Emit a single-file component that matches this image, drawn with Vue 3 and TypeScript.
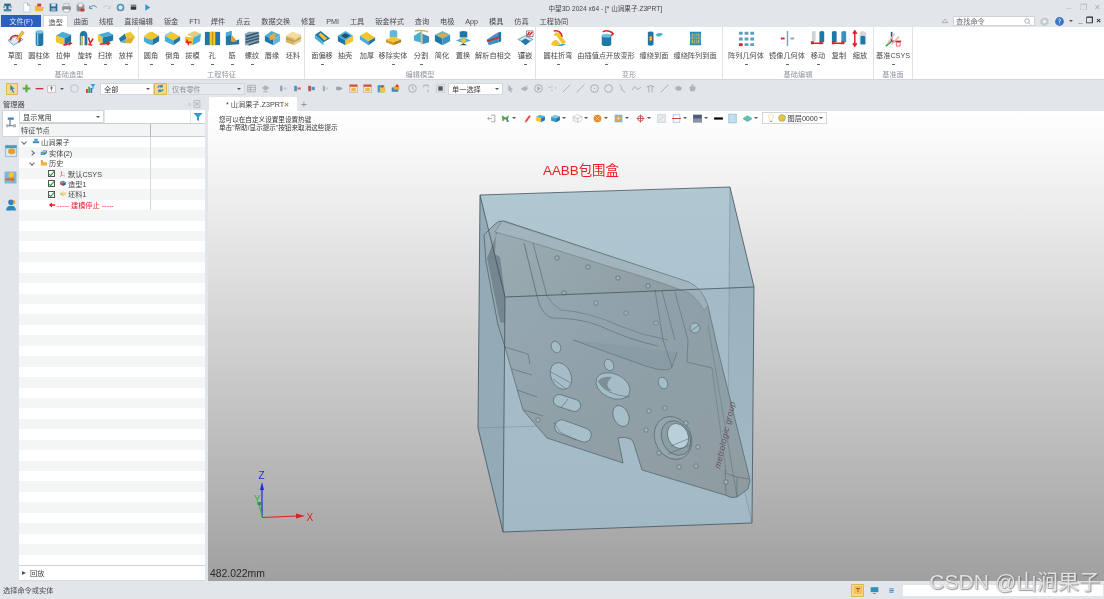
<script setup lang="ts">
import { h } from 'vue';

type Shape = [string, string, string?];

const box = (t: string, l: string, r: string): Shape[] => [
	['M9 3L18 6L11 10L2 7Z', t],
	['M2 7L11 10V17L2 14Z', l],
	['M11 10L18 6V13L11 17Z', r],
];
const BLUE = '#49aed6';
const DEEP = '#1f77a8';
const YEL = '#f3c531';
const TAN = '#e5cc80';
const RED = '#d8262c';

const icons: Record<string, Shape[]> = {
	sketch: [['M2 12L11 7L18 11L8 17Z', '#dce8f2', '#3f7fb0'], ['M5 12a5 4 0 1 1 8 2', 'none', RED], ['M11 10L17 2L19 4L13 11Z', YEL, '#b9801a']],
	cyl: [['M6 3V16A4 2 0 0 0 14 16V3Z', DEEP], ['M6 3A4 2 0 0 1 14 3A4 2 0 0 1 6 3Z', '#74c8e6'], ['M8 5V17', 'none', '#7cc8e8']],
	extrude: [...box(BLUE, YEL, DEEP), ['M10 17L18 15L16 13M18 15L16 17', 'none', RED]],
	revolve: [['M4 17V7Q4 2 8 2Q12 2 12 7V17H9V8Q8 6 7 8V17Z', DEEP], ['M5 17V7L7 8V17Z', YEL], ['M13 9L15 15L18 10M13 16L17 17', 'none', RED]],
	sweep: [['M2 6L13 3L18 6L7 9Z', BLUE], ['M2 6L7 9V16L2 13Z', YEL], ['M7 9L18 6V12L7 16Z', DEEP], ['M4 16L14 15L12 13M14 15L12 17', 'none', RED]],
	loft: [['M8 5L14 3L19 8L10 10Z', YEL], ['M2 10L8 5L10 10L4 14Z', DEEP], ['M10 10L19 8L15 15L8 15Z', '#e2b02c'], ['M4 14L10 10L8 15Z', '#6ea7c2']],
	fillet: [['M2 8Q6 3 11 3L18 7L11 11Q5 11 2 8Z', YEL], ['M2 8Q5 11 11 11V17Q5 16 2 13Z', BLUE], ['M11 11L18 7V13L11 17Z', DEEP]],
	chamfer: [['M2 7L9 3L18 8L11 12Z', YEL], ['M2 7L11 12V17L2 13Z', BLUE], ['M11 12L18 8V12L11 17Z', DEEP], ['M9 3L2 7', 'none', '#8dd0ea']],
	draft: [['M4 6L12 2L19 5L11 9Z', TAN], ['M2 8L11 9L10 17L2 14Z', YEL], ['M11 9L19 5L18 13L10 17Z', BLUE], ['M4 11L6 17M3 14H9', 'none', RED]],
	hole: [['M2 3H18V17H2Z', DEEP], ['M7 3H13V17H7Z', YEL], ['M10 3V17', 'none', '#c79a1c']],
	rib: [['M3 4L9 2V13L17 11V16L3 17Z', DEEP], ['M9 6L15 13L9 14Z', '#ef9c2c'], ['M3 4L9 2V6L3 8Z', BLUE]],
	thread: [['M2 5L6 3L17 3V15L6 17L2 17Z', '#8aa3b3'], ['M3 8L16 4M3 11L17 7M3 14L17 10M6 17L17 13', 'none', '#33566e']],
	lip: [['M2 7L9 2L18 6L11 11Z', BLUE], ['M2 7L11 11V17L2 13Z', DEEP], ['M11 11L18 6V13L11 17Z', '#60b6da'], ['M7 7L13 4V10L7 12Z', '#f1a83a']],
	stock: [...box('#f1dc9c', '#d9b55d', '#e9cf84'), ['M2 10L11 13L18 9', 'none', '#bfa05a']],
	faceoff: [['M2 6L8 2L18 10L11 14Z', DEEP], ['M6 6L8 4L15 10L12 12Z', YEL], ['M2 6L11 14V17L2 10Z', BLUE]],
	shell: [['M2 7L10 2L18 7L10 12Z', BLUE], ['M5 7L10 4.5L15 7L10 10Z', '#234f72'], ['M2 7L10 12V17L2 13Z', DEEP], ['M10 12L18 7V13L10 17Z', YEL]],
	thicken: [['M2 7L9 3L18 9L11 13Z', YEL], ['M2 7L11 13V17L2 11Z', BLUE], ['M11 13L18 9V12L11 17Z', DEEP]],
	remove: [['M6 3A4 2 0 0 1 14 3V9H6Z', '#62b8dc'], ['M2 11L10 8L18 11L10 14Z', YEL], ['M2 11L10 14V17L2 14Z', '#d49a20'], ['M10 14L18 11V14L10 17Z', '#b77f19']],
	split: [['M2 7L9 3L11 5V15L2 12Z', BLUE], ['M11 5L18 8V14L11 16Z', '#3a8fbd'], ['M3 2Q10 1 17 3', 'none', '#cbb67a'], ['M10 2V16', 'none', YEL]],
	simplify: [['M2 6L10 2L18 6L10 10Z', '#69c1a0'], ['M2 6L10 10V17L2 13Z', DEEP], ['M10 10L18 6V13L10 17Z', '#3d92c2'], ['M4 7L10 9L16 6L10 5Z', '#e7a93c']],
	replace: [['M6 9V3Q10 1 14 3V9Z', DEEP], ['M2 12L10 9L18 12L10 15Z', BLUE], ['M7 12L10 9L13 12L10 16Z', YEL], ['M10 15L6 17H14Z', '#234f72']],
	selfx: [['M3 11L14 4L16 14L5 17Z', '#3d92c2'], ['M14 4L18 3L18 13L16 14Z', DEEP], ['M3 13L16 9', 'none', RED]],
	tess: [['M2 11L10 7L18 11L10 15Z', '#cfe2ee', '#3a7ea8'], ['M5 13L10 10L15 13L10 17Z', DEEP], ['M11 2H18V8H11Z', '#fff', '#555'], ['M12 7L14 3M14 7L17 3', 'none', RED]],
	cylbend: [['M2 16Q5 10 9 12L12 16L8 18Q4 18 2 16Z', YEL], ['M6 4Q12 2 14 9L18 14L14 16L10 10Q8 6 5 7Z', YEL], ['M12 16Q16 15 18 16L14 18H8Z', BLUE], ['M5 2Q12 1 14 8', 'none', RED]],
	morph: [['M5 7V16A5 2 0 0 0 15 16V7Z', DEEP], ['M5 7A5 2 0 0 1 15 7A5 2 0 0 1 5 7Z', '#6ac1e2'], ['M6 3Q12 0 17 5M15 3L17 5L15 7', 'none', RED]],
	wrap: [['M3 4A3 1.5 0 0 1 9 4V16A3 1.5 0 0 1 3 16Z', DEEP], ['M4 8H8V12H4Z', RED], ['M11 6Q14 3 19 5Q17 8 13 8Z', BLUE], ['M5 8L7 12M7 8L5 12', 'none', YEL]],
	wraparr: [['M4 3H16Q15 10 16 17H4Q5 10 4 3Z', '#2b8ab8'], ['M6 5H14V15H6Z', YEL], ['M8 5V15M10 5V15M12 5V15M6 8H14M6 11H14', 'none', '#4a9ac0']],
	pattern: [['M2 3H6V6H2ZM8 3H12V6H8ZM14 3H18V6H14ZM8 9H12V12H8ZM14 9H18V12H14ZM8 15H12V18H8ZM14 15H18V18H14ZM2 9H6V12H2Z', '#5f9dc1'], ['M2 15H6V18H2Z', RED]],
	mirror: [['M10 2V18', 'none', '#7fa9c2'], ['M3 9H7V11H3Z', RED], ['M13 9H17V11H13Z', '#7fa9c2']],
	move: [['M3 3Q6 1 7 3V13L3 14Z', '#cfd4d8'], ['M11 3Q14 1 16 3V14H11Z', DEEP], ['M4 15H15', 'none', RED], ['M2 13H5V16H2ZM11 13H14V16H11Z', RED]],
	copy: [['M2 3Q5 1 7 3V14H2Z', DEEP], ['M12 3Q15 1 17 3V14H12Z', '#3790bd'], ['M4 15H15', 'none', RED], ['M2 13H5V16H2ZM12 13H15V16H12Z', RED]],
	scale: [['M4 3V17M2 5L4 2L6 5M2 15L4 18L6 15', 'none', RED], ['M9 4Q12 0 16 4V16Q12 18 9 16Z', '#d3d8dc'], ['M10 8Q12 6 15 8V16H10Z', DEEP]],
	csys: [['M8 3V13', 'none', '#2442c8'], ['M8 13L2 18', 'none', '#2fa84f'], ['M8 13L18 13', 'none', RED], ['M11 5L4 15M8 16L16 8', 'none', '#eeb0b0'], ['M13 14H17V18H13Z', '#fff', RED]],
	page: [['M5 2H12L16 6V18H5Z', '#fff', '#9aa3ab'], ['M12 2V6H16', 'none', '#9aa3ab']],
	open: [['M2 7H8L10 9H18L16 17H2Z', '#f0b93a'], ['M6 3H13V8H6Z', '#d8362c']],
	save: [['M3 3H17V17H3Z', '#2f6d9c'], ['M6 3H14V8H6Z', '#dce6ee'], ['M6 11H14V17H6Z', '#8fb2cc']],
	print: [['M5 3H15V8H5Z', '#eee', '#777'], ['M2 8H18V15H2Z', '#8c949b'], ['M5 13H15V18H5Z', '#fff', '#777']],
	saveas: [['M3 5H17V17H3Z', '#8c949b'], ['M6 2H14V9H6Z', '#eee', '#777'], ['M10 12H17V17H10Z', '#d8362c']],
	undo: [['M4 10Q10 3 16 10', 'none', '#3f83ad'], ['M3 7V12H8', 'none', '#3f83ad']],
	redo: [['M4 10Q10 3 16 10', 'none', '#c2c7cb'], ['M17 7V12H12', 'none', '#c2c7cb']],
	ring: [['M10 3A7 7 0 1 0 10 17A7 7 0 1 0 10 3ZM10 6A4 4 0 1 1 10 14A4 4 0 1 1 10 6Z', '#4f93bb']],
	small: [['M5 8H15V14H5Z', '#333'], ['M5 5H15V6.5H5Z', '#333']],
	play: [['M6 4L15 10L6 16Z', '#2f93d6']],
	logo: [['M4 3H16V7H4Z', '#26627f'], ['M8 7H12V13H8Z', '#26627f'], ['M3 13H17V17H3Z', '#3a86a8'], ['M2 9H6M14 9H18', 'none', '#26627f']],
	select: [['M6 3L14 11L10 11L13 17L11 18L8 12L6 14Z', '#2f85c0']],
	plus: [['M8 3H12V8H17V12H12V17H8V12H3V8H8Z', '#63a83c']],
	minus: [['M3 9H17V11.5H3Z', '#c8333a']],
	frame: [['M3 5H17V17H3Z', '#fff', '#d05a5a'], ['M7 9H13M10 6V14', 'none', '#3478a8']],
	circle: [['M10 3A7 7 0 1 0 10 17A7 7 0 1 0 10 3Z', 'none', '#aebfcd']],
	bars: [['M2 11H5V18H2Z', RED], ['M6 7H9V18H6Z', '#3ea24a'], ['M10 9H13V18H10Z', '#2e6fb8'], ['M10 2H19L15.5 7V11L13.5 12V7Z', '#27a7d8']],
	swirl: [['M4 8Q6 3 12 4L14 2V8H8L10 6Q7 6 6 9Z', '#2f85c0'], ['M16 12Q14 17 8 16L6 18V12H12L10 14Q13 14 14 11Z', '#2f85c0']],
	gtable: [['M3 4H17V16H3Z', 'none', '#a8aeb3'], ['M3 8H17M3 12H17M8 4V16', 'none', '#a8aeb3']],
	gblock: [['M3 9L10 4L17 9L10 14Z', '#adb3b8'], ['M6 15H14V17H6Z', '#adb3b8']],
	pinA: [['M4 5H8V15H4Z', '#8aa0ae'], ['M10 8H16V12H10Z', '#c2cbd1']],
	pinB: [['M4 5H9V15H4Z', '#4f95bf'], ['M10 8H16V12H10Z', '#d8626a']],
	pinC: [['M4 5H9V15H4Z', '#c44f58'], ['M10 7H16V13H10Z', '#4f95bf']],
	pinD: [['M5 5H9V15H5Z', '#9cb0bc'], ['M10 8H15V12H10Z', '#c2cbd1']],
	pinE: [['M4 7H11L16 10L11 13H4Z', '#9aa4ac']],
	tabA: [['M3 3H17V17H3Z', '#e8eef2', '#b06a2c'], ['M3 3H17V7H3Z', '#d8533a'], ['M6 9H14V15H6Z', '#f0b93a']],
	tabB: [['M3 4H15V17H3Z', '#3f9ac5'], ['M7 8H17V17H7Z', YEL], ['M10 3L13 6L10 9Z', RED]],
	tabC: [['M3 8H15V16H3Z', '#3f8ab5'], ['M7 5H17V12H7Z', '#e9a93a'], ['M11 3H15V7H11Z', RED]],
	clock: [['M10 3A7 7 0 1 0 10 17A7 7 0 1 0 10 3ZM10 6V10L13 12', 'none', '#a2a7ab']],
	hook: [['M5 4H13V8M13 12V17M5 4V8', 'none', '#a2a7ab']],
	stop: [['M6 6H14V14H6Z', '#55595d'], ['M3 3H17V17H3Z', 'none', '#c9ccd0']],
	gcursor: [['M6 3L15 12H11L13 17L10 17L8 13L6 15Z', '#aeb4b8']],
	gpart: [['M3 11L10 6L17 9L11 15Z', '#aeb4b8'], ['M12 4L16 4L16 8Z', '#c9ccd0']],
	gplay: [['M10 3A7 7 0 1 0 10 17A7 7 0 1 0 10 3Z', 'none', '#a2a7ab'], ['M8 6L14 10L8 14Z', '#a2a7ab']],
	gdots: [['M3 8H6M9 5V8M14 9H17M9 12V15', 'none', '#a8adb1']],
	gline: [['M3 17L17 3', 'none', '#a8adb1']],
	gcdot: [['M10 3A7 7 0 1 0 10 17A7 7 0 1 0 10 3Z', 'none', '#a2a7ab'], ['M9 9H11V11H9Z', '#a2a7ab']],
	gring: [['M10 3A7 7 0 1 0 10 17A7 7 0 1 0 10 3Z', 'none', '#a2a7ab']],
	gzig: [['M5 3L9 9L8 12L15 17', 'none', '#a2a7ab']],
	gwave: [['M2 13L7 6L12 12L18 8', 'none', '#a2a7ab']],
	garch: [['M3 7Q10 2 17 7M7 6V17M13 6V17', 'none', '#a2a7ab']],
	gblob: [['M3 9L9 5L14 7L17 9L13 14L7 14Z', '#aeb4b8']],
	gbell: [['M4 7H16L14 15H6Z', '#aeb4b8'], ['M8 3H12V7H8Z', '#aeb4b8']],
	exit: [['M9 4H16V16H9', 'none', '#9aa3ab'], ['M3 10H11M6 7L3 10L6 13', 'none', '#9aa3ab']],
	vfilter: [['M3 4L10 8L16 4L14 15L9 11L5 16Z', '#54a648'], ['M12 10L17 15L12 17Z', '#4a85c0']],
	pencil: [['M5 15L13 4L16 6L8 17Z', '#e5484d'], ['M5 15L8 17L4 18Z', '#f3c531']],
	cubeY: box('#56b3d8', YEL, DEEP),
	cubeB: box('#7cc8e6', '#3a9acb', DEEP),
	cubeW: [['M9 3L18 6L11 10L2 7Z', '#fff', '#8b9aa5'], ['M2 7L11 10V17L2 14Z', '#f1f4f6', '#8b9aa5'], ['M11 10L18 6V13L11 17Z', '#fff', '#8b9aa5']],
	ballO: [['M10 3A7 7 0 1 0 10 17A7 7 0 1 0 10 3Z', '#e68a2c'], ['M6 6L14 14M14 6L6 14', 'none', '#f6ce64']],
	donut: [['M3 3H17V17H3Z', '#7fb5d6'], ['M10 5A5 5 0 1 0 10 15A5 5 0 1 0 10 5Z', '#eea53a'], ['M10 8A2 2 0 1 0 10 12A2 2 0 1 0 10 8Z', '#d6e5ee']],
	axisR: [['M10 3V17M3 10H17', 'none', '#c9454c'], ['M10 5A5 5 0 1 0 10 15A5 5 0 1 0 10 5Z', 'none', '#c9454c']],
	picture: [['M3 3H17V17H3Z', '#e8eef2', '#8fa7b8'], ['M6 13L14 6', 'none', '#b9cbd8']],
	sect: [['M4 3H16V17H4Z', '#fff', '#3478a8'], ['M2 10H18', 'none', RED]],
	shade: [['M2 3H18V17H2Z', '#495f7e'], ['M2 10H18V17H2Z', '#8d93a0']],
	black: [['M2 8H18V12H2Z', '#000']],
	sq: [['M3 2H17V18H3Z', '#bfe0ee', '#5d8ca8']],
	teal: [['M10 4L18 9L10 14L2 9Z', '#5ec4b5'], ['M2 9L10 14V16L2 11ZM18 9L10 14V16L18 11Z', '#3c948e']],
	bulb: [['M10 2A5 5 0 0 0 7 11V15H13V11A5 5 0 0 0 10 2Z', '#fff', '#d9b23a'], ['M8 17H12', 'none', '#888']],
	layer: [['M10 3A7 7 0 1 0 10 17A7 7 0 1 0 10 3Z', '#e8c53a', '#3e8ab3']],
	tree: [['M5 2H13V5H5Z', '#2f85bd'], ['M8 5V13M3 13H16', 'none', '#6c7a85'], ['M3 11H6V15H3ZM12 11H16V15H12Z', '#a9b4bc']],
	rail2: [['M2 2H18V18H2Z', '#d9e7f1', '#4f93bb'], ['M2 2H18V6H2Z', '#3f9ac5'], ['M6 8L11 6L16 8L11 11ZM6 8L11 11V15L6 13ZM16 8L11 11V15L16 13Z', '#ef9c2c']],
	rail3: [['M2 2H18V18H2Z', '#7eb8d9'], ['M11 3A3.5 3.5 0 1 0 11 10A3.5 3.5 0 1 0 11 3Z', '#f3c531'], ['M3 11H12V14H3Z', '#e26a32'], ['M12 9L16 12.5L12 16Z', '#e26a32']],
	rail4: [['M10 2A4 4 0 1 0 10 10A4 4 0 1 0 10 2Z', '#2f85bd'], ['M3 18Q3 11 10 11Q17 11 17 18Z', '#2f85bd'], ['M13 3A3 3 0 1 1 13 9Z', '#e5a030']],
	asm: [['M6 2H14V7H6Z', '#3a8fbd'], ['M2 8H18V13H2Z', '#3a8fbd']],
	solid: [['M2 9L8 4H17V10L11 15H2Z', DEEP], ['M4 5H15V9H4Z', '#e5c347'], ['M2 9L11 9V15H2Z', '#4aa8d2']],
	folder: [['M2 6H8L10 8H18V16H2Z', '#eeb23c'], ['M2 3H7L8 6H2Z', '#d8813a']],
	csysT: [['M6 3V13', 'none', RED], ['M6 13L15 15', 'none', '#c97c7c'], ['M6 13L3 17', 'none', '#2fa84f'], ['M6 4L15 9', 'none', '#c6cbd0']],
	model: [['M3 4L10 2L17 5L10 8Z', '#3f9ac5'], ['M3 4L10 8V15L3 11Z', '#c94a4a'], ['M10 8L17 5V12L10 15Z', '#2f6d9c']],
	blank: [['M3 7L11 3L18 7L10 11Z', '#f0dc9a'], ['M3 7L10 11V15L3 11Z', '#dab85c'], ['M10 11L18 7V11L10 15Z', '#eed188']],
	stopArrow: [['M10 4V8H18V12H10V16L2 10Z', '#e21f2a']],
	funnel: [['M1 2H19L12 10V18L8 16V10Z', '#27a1d2']],
	gear: [['M10 2L12 4L15 3L16 6L18 8L17 11L18 14L15 15L13 18L10 17L7 18L5 15L2 14L3 11L2 8L5 6L6 3L9 4Z', '#c6cacd'], ['M10 7A3 3 0 1 0 10 13A3 3 0 1 0 10 7Z', '#eef0f2']],
	help: [['M10 2A8 8 0 1 0 10 18A8 8 0 1 0 10 2Z', '#3d75c8'], ['M8 7Q10 4 12 7Q12 9 10 10V12M10 14V15', 'none', '#fff']],
	tri: [['M10 5L17 14H3Z', 'none', '#8b9299']],
	search: [['M9 4A5 5 0 1 0 9 14A5 5 0 1 0 9 4ZM13 13L17 17', 'none', '#8b9299']],
	ovl: [['M3 3H17V17H3Z', '#f2c55e', '#d99a2a'], ['M6 6H14V8H6ZM9 8H11V14H9Z', '#c44a3a']],
	mon: [['M3 4H17V13H3Z', '#2f93b5'], ['M7 15H13V16H7Z', '#556']],
	list: [['M4 4H16V16H4Z', '#dbe6ef'], ['M6 7H14M6 10H14M6 13H14', 'none', '#3f7fb0']],
};

// renders one entry of the icon table at the requested size
const Glyph = (p: { name: string; size?: number }) =>
	h(
		'svg',
		{ width: p.size ?? 12, height: p.size ?? 12, viewBox: '0 0 20 20', class: 'glyph' },
		(icons[p.name] ?? []).map((s) =>
			h('path', {
				d: s[0],
				fill: s[1],
				stroke: s[2] ?? (s[1] === 'none' ? '#888' : 'none'),
				'stroke-width': s[1] === 'none' ? 1.6 : 0.7,
			}),
		),
	);

const quick = ['page', 'open', 'save', 'print', 'saveas', 'undo', 'redo', 'ring', 'small', 'play'];

const tabs = ['造型', '曲面', '线框', '直接编辑', '钣金', 'FTI', '焊件', '点云', '数据交换', '修复', 'PMI', '工具', '钣金样式', '查询', '电极', 'App', '模具', '仿真', '工程协同'];

interface RibbonItem { label: string; icon: string; w: number; dash?: boolean }
const ribbon: { title: string; width: number; pad: number; items: RibbonItem[] }[] = [
	{ title: '基础造型', width: 139, pad: 3, items: [
		{ label: '草图', icon: 'sketch', w: 24, dash: true },
		{ label: '圆柱体', icon: 'cyl', w: 24, dash: true },
		{ label: '拉伸', icon: 'extrude', w: 24, dash: true },
		{ label: '旋转', icon: 'revolve', w: 20, dash: true },
		{ label: '扫掠', icon: 'sweep', w: 20, dash: true },
		{ label: '放样', icon: 'loft', w: 22, dash: true },
	] },
	{ title: '工程特征', width: 166, pad: 1, items: [
		{ label: '圆角', icon: 'fillet', w: 22, dash: true },
		{ label: '倒角', icon: 'chamfer', w: 21, dash: true },
		{ label: '拔模', icon: 'draft', w: 19, dash: true },
		{ label: '孔', icon: 'hole', w: 20, dash: true },
		{ label: '筋', icon: 'rib', w: 20, dash: true },
		{ label: '螺纹', icon: 'thread', w: 20, dash: true },
		{ label: '唇缘', icon: 'lip', w: 20 },
		{ label: '坯料', icon: 'stock', w: 22 },
	] },
	{ title: '编辑模型', width: 231, pad: 6, items: [
		{ label: '面偏移', icon: 'faceoff', w: 22, dash: true },
		{ label: '抽壳', icon: 'shell', w: 24 },
		{ label: '加厚', icon: 'thicken', w: 20 },
		{ label: '移除实体', icon: 'remove', w: 32, dash: true },
		{ label: '分割', icon: 'split', w: 24, dash: true },
		{ label: '简化', icon: 'simplify', w: 18 },
		{ label: '置换', icon: 'replace', w: 24 },
		{ label: '解析自相交', icon: 'selfx', w: 36 },
		{ label: '镶嵌', icon: 'tess', w: 28, dash: true },
	] },
	{ title: '变形', width: 187, pad: 0, items: [
		{ label: '圆柱折弯', icon: 'cylbend', w: 44, dash: true },
		{ label: '由插值点开放变形', icon: 'morph', w: 52, dash: true },
		{ label: '缠绕到面', icon: 'wrap', w: 44 },
		{ label: '缠绕阵列到面', icon: 'wraparr', w: 38 },
	] },
	{ title: '基础编辑', width: 151, pad: 0, items: [
		{ label: '阵列几何体', icon: 'pattern', w: 46, dash: true },
		{ label: '镜像几何体', icon: 'mirror', w: 36, dash: true },
		{ label: '移动', icon: 'move', w: 26, dash: true },
		{ label: '复制', icon: 'copy', w: 16 },
		{ label: '缩放', icon: 'scale', w: 26 },
	] },
	{ title: '基准面', width: 39, pad: 0, items: [{ label: '基准CSYS', icon: 'csys', w: 38, dash: true }] },
];

interface ToolItem { g?: string; w: number; combo?: string; off?: boolean; hot?: boolean }
const tools: ToolItem[] = [
	{ g: 'select', w: 12, hot: true }, { g: 'plus', w: 16 }, { g: 'minus', w: 10 }, { g: 'frame', w: 14 },
	{ g: 'caret', w: 7 }, { g: 'circle', w: 18 }, { g: 'bars', w: 14 }, { w: 3 },
	{ combo: '全部', w: 54 }, { g: 'swirl', w: 13, hot: true }, { w: 1 }, { combo: '仅有零件', w: 77, off: true },
	{ g: 'gtable', w: 13 }, { g: 'gblock', w: 14 }, { w: 4 },
	{ g: 'pinA', w: 14 }, { g: 'pinB', w: 14 }, { g: 'pinC', w: 14 }, { g: 'pinD', w: 14 }, { g: 'pinE', w: 14 },
	{ g: 'tabA', w: 14 }, { g: 'tabA', w: 14 }, { g: 'tabB', w: 14 }, { g: 'tabC', w: 14 }, { w: 3 },
	{ g: 'clock', w: 14 }, { g: 'hook', w: 14 }, { g: 'stop', w: 14 }, { w: 1 },
	{ combo: '单一选择', w: 55 },
	...['gcursor', 'gpart', 'gplay', 'gdots', 'gline', 'gline', 'gcdot', 'gring', 'gzig', 'gwave', 'garch', 'gline', 'gblob', 'gbell'].map((g) => ({ g, w: 14 })),
];

// viewport toolbar: icon centre on the page, and whether a drop arrow follows
const viewSpec: [string, number, boolean][] = [
	['exit', 491, false], ['vfilter', 505, true], ['pencil', 527, false], ['cubeY', 540, false], ['cubeB', 555, true],
	['cubeW', 577, true], ['ballO', 597, true], ['donut', 618, true], ['axisR', 640, true], ['picture', 661, false],
	['sect', 676, true], ['shade', 697, true], ['black', 718, false], ['sq', 732, false], ['teal', 747, true],
];
let cursor = 486;
const viewTools = viewSpec.map(([g, c, arrow]) => {
	const ml = c - 5.5 - cursor;
	cursor = c + 5.5 + (arrow ? 6 : 0);
	return { g, ml, arrow };
});

const nodes = [
	{ pad: 2, chev: 'v', icon: 'asm', label: '山涧果子' },
	{ pad: 10, chev: '>', icon: 'solid', label: '实体(2)' },
	{ pad: 10, chev: 'v', icon: 'folder', label: '历史' },
	{ pad: 29, check: true, icon: 'csysT', label: '默认CSYS' },
	{ pad: 29, check: true, icon: 'model', label: '造型1' },
	{ pad: 29, check: true, icon: 'blank', label: '坯料1' },
	{ pad: 29, icon: 'stopArrow', label: '----- 建模停止 -----', stop: true },
];
const rows = Array.from({ length: 41 }, (_, i) => nodes[i] ?? null);

const smallHoles: [number, number][] = [
	[557, 258], [588, 267], [618, 278], [648, 286], [564, 293], [596, 303], [626, 313], [656, 323],
	[649, 411], [665, 408], [686, 423], [698, 447], [696, 466], [679, 467], [659, 453], [646, 430], [538, 420], [726, 482],
];
const ovalHoles: [number, number, number, number, number][] = [
	[556, 347, 4.5, 6, -25], [561, 376, 10, 14, -25], [613, 386, 18, 12, 25], [609, 365, 4.5, 6, -25],
	[663, 383, 4.5, 6, -25], [621, 416, 7.5, 11, -25], [695, 328, 5, 5, 0],
];
</script>

<template>
	<div class="app">
		<div class="titlebar">
			<Glyph name="logo" :size="11" />
			<div class="quick">
				<Glyph v-for="q in quick" :key="q" :name="q" :size="11" />
			</div>
			<span class="title">中望3D 2024 x64 - [* 山涧果子.Z3PRT]</span>
			<div class="winbtns">
				<span class="wb">–</span><span class="wb">❐</span><span class="wb">✕</span>
			</div>
		</div>

		<div class="tabbar">
			<div class="filetab">文件(F)</div>
			<div
				v-for="(t, i) in tabs"
				:key="t"
				class="tab"
				:class="{ active: i === 0 }"
			>{{ t }}</div>
			<div class="tab-right">
				<Glyph name="tri" :size="8" />
				<div class="search"><span>查找命令</span><Glyph name="search" :size="9" /></div>
				<Glyph name="gear" :size="11" />
				<Glyph name="help" :size="11" />
				<span class="caret"></span>
				<span class="wctl">_</span><span class="wctl">❐</span><span class="wctl">×</span>
			</div>
		</div>

		<div class="ribbon">
			<section
				v-for="g in ribbon"
				:key="g.title"
				class="group"
				:style="{ width: g.width + 'px' }"
			>
				<div class="group-items" :style="{ paddingLeft: g.pad + 'px' }">
					<div
						v-for="it in g.items"
						:key="it.label"
						class="rb-item"
						:style="{ width: it.w + 'px' }"
					>
						<Glyph :name="it.icon" :size="19" />
						<span class="rb-label">{{ it.label }}</span>
						<i v-if="it.dash" class="rb-dash"></i>
					</div>
				</div>
				<div class="group-title">{{ g.title }}</div>
			</section>
		</div>

		<div class="toolbar">
			<template v-for="(t, i) in tools" :key="i">
				<div v-if="t.combo" class="combo" :class="{ off: t.off }" :style="{ width: t.w + 'px' }">
					<span>{{ t.combo }}</span><i class="caret"></i>
				</div>
				<div v-else class="tb-cell" :class="{ hot: t.hot }" :style="{ width: t.w + 'px' }">
					<i v-if="t.g === 'caret'" class="caret"></i>
					<Glyph v-else-if="t.g" :name="t.g" :size="11" />
				</div>
			</template>
		</div>

		<div class="main">
			<aside class="manager">
				<div class="mgr-head">
					<span>管理器</span>
					<span class="mgr-ctl">▫ ⊠</span>
				</div>
				<div class="mgr-body">
					<nav class="rail">
						<div class="rail-tab on"><Glyph name="tree" :size="15" /></div>
						<div class="rail-tab"><Glyph name="rail2" :size="14" /></div>
						<div class="rail-tab"><Glyph name="rail3" :size="15" /></div>
						<div class="rail-tab"><Glyph name="rail4" :size="14" /></div>
					</nav>
					<div class="panel">
						<div class="filter-row">
							<div class="combo wide"><span>显示常用</span><i class="caret"></i></div>
							<div class="filter-input"></div>
							<div class="filter-btn"><Glyph name="funnel" :size="10" /></div>
						</div>
						<div class="col-head">
							<span class="col-a">特征节点</span>
							<span class="col-b"></span>
						</div>
						<div class="rows">
							<div
								v-for="(r, i) in rows"
								:key="i"
								class="row"
								:class="{ odd: i % 2 === 1 }"
							>
								<div v-if="r" class="cell" :class="{ stop: r.stop }" :style="{ paddingLeft: r.pad + 'px' }">
									<i v-if="r.chev" class="chev" :class="{ closed: r.chev === '>' }"></i>
									<i v-if="r.check" class="check"></i>
									<Glyph :name="r.icon" :size="8" />
									<span>{{ r.label }}</span>
								</div>
							</div>
						</div>
						<div class="playback">
							<i class="play-tri"></i><span>回放</span>
						</div>
					</div>
				</div>
			</aside>

			<section class="work">
				<div class="doc-tabs">
					<div class="doc-tab">
						<span>* 山涧果子.Z3PRT</span>
						<b>×</b>
					</div>
					<span class="doc-add">+</span>
				</div>
				<div class="viewport">
					<svg class="scene" width="896" height="469" viewBox="208 111 896 469">
						<defs>
							<linearGradient id="bx" x1="0" y1="0" x2="0" y2="1">
								<stop offset="0" stop-color="#b0c8d2" />
								<stop offset="1" stop-color="#a0b9c5" />
							</linearGradient>
							<linearGradient id="fr" x1="0" y1="0" x2="0" y2="1">
								<stop offset="0" stop-color="#8ea6b2" stop-opacity=".3" />
								<stop offset=".55" stop-color="#98b0bc" stop-opacity=".14" />
								<stop offset="1" stop-color="#a6bfca" stop-opacity="0" />
							</linearGradient>
							<linearGradient id="pl" x1="0" y1="0" x2="1" y2="1">
								<stop offset="0" stop-color="#9cadb5" />
								<stop offset=".5" stop-color="#8f9da4" />
								<stop offset="1" stop-color="#8d9a9f" />
							</linearGradient>
						</defs>

						<!-- aabb box, back -->
						<path d="M480 195L730 187L754 287L752 523L503 532L478 428Z" fill="url(#bx)" />
						<path d="M480 195L505 297L503 532L478 428Z" fill="#92abb6" />
						<path d="M730 187L754 287L752 523L746 497L728 420Z" fill="#a0b8c3" />
						<path d="M478 428L728 420M730 187L728 420L752 523" fill="none" stroke="#6f8794" stroke-width=".5" />

						<!-- plate -->
						<path
							d="M494 225Q498 220 504 221L688 282Q702 288 708 306L718 350L750 480L748 489L737 497Q731 499 725 495L642 470L633 441Q628 436 618 438L623 463L547 438L523 410L505 347L498 325L486 262L484 235Z"
							fill="url(#pl)"
							stroke="#465760"
							stroke-width=".7"
						/>
						<path d="M502 221L496 231L495 254L500 257L505 295V323L500 322L487 258Z" fill="#76868e" />
						<path d="M495 232L502 221L689 282Q702 288 708 306L704 310Q696 297 689 293Q650 278 614 268L524 240Z" fill="#a2b4bc" stroke="#56666e" stroke-width=".4" />
						<path d="M524 243L538 300Q542 315 552 318Q580 318 600 326Q630 340 658 346" fill="none" stroke="#48585f" stroke-width=".6" />
						<path d="M533 243L547 296Q552 305 561 310Q590 312 620 326Q645 336 668 340" fill="none" stroke="#48585f" stroke-width=".5" />
						<path d="M573 340L640 364Q668 374 672 367L677 352" fill="#87979e" stroke="#48585f" stroke-width=".6" />
						<path d="M655 290L663 340L672 367M662 291L675 340M675 292L688 340L687 362L712 368" fill="none" stroke="#48585f" stroke-width=".6" />
						<path d="M708 325L733 473L737 497M712 368L726 472" fill="none" stroke="#56666e" stroke-width=".5" />
						<path d="M505 347L528 354L530 364M512 369L532 375M517 390L537 397M524 410L543 416" fill="none" stroke="#48585f" stroke-width=".6" />
						<path d="M725 470L726 495M725 473L737 477L737 497M737 477L749 479" fill="none" stroke="#48585f" stroke-width=".5" />

						<ellipse
							v-for="(o, i) in ovalHoles"
							:key="'o' + i"
							:cx="o[0]"
							:cy="o[1]"
							:rx="o[2]"
							:ry="o[3]"
							:transform="`rotate(${o[4]} ${o[0]} ${o[1]})`"
							fill="#a8c1cb"
							stroke="#40525a"
							stroke-width=".6"
						/>
						<path d="M551 372L571 383M553 379L566 389M598 381Q605 395 630 397" fill="none" stroke="#4b5d65" stroke-width=".6" />
						<path d="M598 381Q602 376 612 377Q603 385 612 391Q604 392 598 381Z" fill="#78888f" />
						<rect x="553" y="397" width="28" height="12" rx="6" transform="rotate(18 567 403)" fill="#a8c1cb" stroke="#40525a" stroke-width=".6" />
						<path d="M561 408L568 399" stroke="#4b5d65" stroke-width=".6" />
						<rect x="554" y="424" width="38" height="14" rx="7" transform="rotate(20 573 431)" fill="#a8c1cb" stroke="#40525a" stroke-width=".6" />
						<path d="M554 422L560 432L576 440" fill="none" stroke="#4b5d65" stroke-width=".5" />
						<ellipse cx="673" cy="438" rx="18" ry="22" transform="rotate(-25 673 438)" fill="#96a4aa" stroke="#40525a" stroke-width=".6" />
						<ellipse cx="676" cy="438" rx="14" ry="18" transform="rotate(-25 676 438)" fill="#8a9aa1" stroke="#40525a" stroke-width=".6" />
						<ellipse cx="678" cy="436" rx="10" ry="13" transform="rotate(-25 678 436)" fill="#bcd4dc" stroke="#40525a" stroke-width=".6" />
						<path d="M671 446L688 439M668 454L690 445" fill="none" stroke="#40525a" stroke-width=".5" />
						<circle
							v-for="(s, i) in smallHoles"
							:key="'s' + i"
							:cx="s[0]"
							:cy="s[1]"
							r="2.2"
							fill="#a2b3ba"
							stroke="#40525a"
							stroke-width=".55"
						/>
						<path d="M691 331L699 325" stroke="#40525a" stroke-width=".6" />
						<text class="brand" transform="translate(720 469) rotate(-77)">metrologic group</text>

						<!-- aabb box, front -->
						<path d="M505 297L754 287L752 523L503 532Z" fill="url(#fr)" />
						<path d="M480 195L730 187L754 287L505 297ZM480 195L478 428L503 532L752 523L754 287M505 297L503 532" fill="none" stroke="#3f4d55" stroke-width=".75" />

						<!-- triad -->
						<path d="M262 517V489" stroke="#1a2fd6" stroke-width="1.2" />
						<path d="M262 482L264 490H260Z" fill="#1a2fd6" />
						<path d="M262 517L259 503" stroke="#3fb53f" stroke-width="1.2" />
						<path d="M257.5 502H261V505H257.5Z" fill="#1f9d3a" />
						<path d="M262 517.5L298 516" stroke="#e01f1f" stroke-width="1.2" />
						<path d="M305 516L296 513.5V518.5Z" fill="#e01f1f" />
						<text class="axis z" x="258.5" y="479">Z</text>
						<text class="axis y" x="254" y="503">Y</text>
						<text class="axis x" x="306.5" y="521">X</text>
					</svg>

					<div class="hint">您可以在自定义设置里设置热键<br />单击"帮助/显示提示"按钮来取消这些提示</div>

					<div class="view-tools">
						<template v-for="(v, i) in viewTools" :key="i">
							<Glyph :name="v.g" :size="11" :style="{ marginLeft: v.ml + 'px' }" />
							<i v-if="v.arrow" class="caret small"></i>
						</template>
						<div class="combo layer">
							<Glyph name="bulb" :size="10" /><Glyph name="layer" :size="10" />
							<span>图层0000</span><i class="caret"></i>
						</div>
					</div>

					<div class="aabb">AABB包围盒</div>
					<div class="scale">482.022mm</div>
				</div>
			</section>
		</div>

		<footer class="status">
			<span class="status-text">选择命令或实体</span>
			<div class="status-right">
				<span class="st-btn hot"><Glyph name="ovl" :size="10" /></span>
				<span class="st-btn"><Glyph name="mon" :size="11" /></span>
				<span class="st-btn"><Glyph name="list" :size="11" /></span>
				<div class="st-input"></div>
			</div>
		</footer>

		<div class="watermark">CSDN @山涧果子</div>
	</div>
</template>

<style scoped>
.app {
	position: relative;
	width: 1104px;
	height: 599px;
	display: flex;
	flex-direction: column;
	overflow: hidden;
	background: #e2e6ea;
	color: #444;
	font-family: 'Liberation Sans', 'Noto Sans CJK SC', sans-serif;
	font-size: 7.2px;
	filter: blur(0.42px);
}

.glyph {
	flex: none;
	display: block;
}

.titlebar {
	flex: 0 0 15px;
	display: flex;
	align-items: center;
	padding-left: 2px;
}

.quick {
	display: flex;
	gap: 2.4px;
	margin-left: 8px;
}

.title {
	margin-left: 396px;
	font-size: 6.6px;
	color: #444;
}

.winbtns {
	margin-left: auto;
	display: flex;
	gap: 4px;
	padding-right: 2px;
	color: #a9afb4;
	font-size: 8px;
}

.wb {
	width: 10px;
	text-align: center;
}

.tabbar {
	flex: 0 0 12px;
	display: flex;
	align-items: stretch;
	padding-left: 1px;
}

.filetab {
	width: 40px;
	margin-right: 2px;
	background: #2b5fbd;
	color: #dfe8f7;
	display: flex;
	align-items: center;
	justify-content: center;
}

.tab {
	padding: 0 5.45px;
	display: flex;
	align-items: center;
	color: #4a4a4a;
	white-space: nowrap;
}

.tab.active {
	background: #fff;
	border: 1px solid #d4d7da;
	border-bottom: none;
	padding: 0 4.45px;
}

.tab-right {
	margin-left: auto;
	display: flex;
	align-items: center;
	gap: 4px;
	padding-right: 2px;
}

.search {
	width: 82px;
	height: 10px;
	background: #fff;
	border: 1px solid #cfd3d7;
	display: flex;
	align-items: center;
	justify-content: space-between;
	padding: 0 2px;
	color: #666;
	box-sizing: border-box;
}

.wctl {
	width: 7px;
	text-align: center;
	font-size: 8px;
	line-height: 8px;
	color: #222;
	font-weight: 700;
}

.wctl + .wctl {
	margin-left: -2px;
}

.ribbon {
	flex: 0 0 53px;
	display: flex;
	background: #fff;
	border-bottom: 1px solid #d3d7db;
	box-sizing: border-box;
}

.group {
	flex: none;
	display: flex;
	flex-direction: column;
	border-right: 1px solid #e0e3e6;
	box-sizing: border-box;
}

.group-items {
	flex: 0 0 42px;
	display: flex;
}

.rb-item {
	flex: none;
	display: flex;
	flex-direction: column;
	align-items: center;
	padding-top: 2px;
}

.rb-label {
	margin-top: 3px;
	line-height: 9px;
	white-space: nowrap;
	color: #4a4a4a;
}

.rb-dash {
	width: 3px;
	height: 1px;
	margin-top: 4px;
	background: #666;
}

.group-title {
	flex: 1;
	display: flex;
	align-items: center;
	justify-content: center;
	color: #9296a0;
}

.toolbar {
	flex: 0 0 17px;
	display: flex;
	align-items: center;
	padding-left: 6px;
}

.tb-cell {
	flex: none;
	height: 12px;
	display: flex;
	align-items: center;
	justify-content: center;
}

.tb-cell.hot {
	background: #f7d98a;
	outline: 1px solid #e3b64f;
	outline-offset: -1px;
}

.caret {
	display: block;
	flex: none;
	width: 0;
	height: 0;
	border-left: 2px solid transparent;
	border-right: 2px solid transparent;
	border-top: 2px solid #555;
}

.caret.small {
	margin-left: 1px;
	margin-right: 1px;
}

.combo {
	flex: none;
	height: 12px;
	padding: 0 3px;
	background: #fff;
	border: 1px solid #d3d7db;
	box-sizing: border-box;
	display: flex;
	align-items: center;
	justify-content: space-between;
	color: #3a3a3a;
	white-space: nowrap;
}

.combo.off {
	background: #e7eaed;
	color: #8e9398;
}

.main {
	flex: 0 0 484px;
	display: flex;
	min-height: 0;
}

.manager {
	flex: 0 0 205px;
	display: flex;
	flex-direction: column;
}

.mgr-head {
	flex: 0 0 13px;
	display: flex;
	align-items: center;
	justify-content: space-between;
	padding: 0 4px 0 3px;
	color: #444;
}

.mgr-ctl {
	color: #9aa0a5;
	font-size: 8px;
}

.mgr-body {
	flex: 1;
	display: flex;
	min-height: 0;
}

.rail {
	flex: 0 0 19px;
	display: flex;
	flex-direction: column;
	align-items: flex-end;
}

.rail-tab {
	width: 17px;
	height: 27px;
	display: flex;
	align-items: center;
	justify-content: center;
}

.rail-tab.on {
	background: #fff;
	border: 1px solid #cfd3d7;
	border-right: none;
	box-sizing: border-box;
}

.panel {
	flex: 1;
	min-width: 0;
	display: flex;
	flex-direction: column;
	background: #fff;
	border-bottom: 1px solid #d8dbde;
}

.filter-row {
	flex: 0 0 13px;
	display: flex;
	align-items: stretch;
	gap: 1px;
	background: #e2e6ea;
}

.combo.wide {
	width: 85px;
	height: auto;
}

.filter-input {
	flex: 1;
	background: #fff;
}

.filter-btn {
	flex: 0 0 14px;
	background: #fff;
	display: flex;
	align-items: center;
	justify-content: center;
}

.col-head {
	flex: 0 0 14px;
	display: flex;
	background: #f3f4f5;
	border-top: 1px solid #c9cdd1;
	border-bottom: 1px solid #c9cdd1;
	box-sizing: border-box;
}

.col-a {
	flex: 0 0 132px;
	box-sizing: border-box;
	padding-left: 2px;
	display: flex;
	align-items: center;
	border-right: 1px solid #b5babe;
}

.rows {
	flex: 0 0 428px;
	display: flex;
	flex-direction: column;
}

.row {
	flex: 1;
	display: flex;
	background: #fff;
}

.row.odd {
	background: #f4f5f5;
}

.cell {
	flex: 0 0 132px;
	display: flex;
	align-items: center;
	gap: 1px;
	border-right: 1px solid #d5d8db;
	box-sizing: border-box;
	white-space: nowrap;
}

.cell.stop {
	color: #e4202c;
}

.chev {
	flex: none;
	width: 3px;
	height: 3px;
	margin: -1px 5px 0 1px;
	border-right: 1px solid #666;
	border-bottom: 1px solid #666;
	transform: rotate(45deg);
}

.chev.closed {
	margin-top: 0;
	transform: rotate(-45deg);
}

.check {
	flex: none;
	width: 7px;
	height: 7px;
	margin-right: 3px;
	border: 1px solid #555;
	background: #fff;
	box-sizing: border-box;
	position: relative;
}

.check::after {
	content: '';
	position: absolute;
	left: 1px;
	top: -1px;
	width: 2px;
	height: 5px;
	border-right: 1px solid #1f9d3a;
	border-bottom: 1px solid #1f9d3a;
	transform: rotate(40deg);
}

.playback {
	flex: 1;
	display: flex;
	align-items: center;
	gap: 4px;
	padding-left: 3px;
	border-top: 1px solid #cfd3d7;
}

.play-tri {
	width: 0;
	height: 0;
	border-left: 4px solid #555;
	border-top: 2.5px solid transparent;
	border-bottom: 2.5px solid transparent;
}

.work {
	flex: 1;
	min-width: 0;
	display: flex;
	flex-direction: column;
	margin-left: 3px;
}

.doc-tabs {
	flex: 0 0 14px;
	display: flex;
	align-items: stretch;
}

.doc-tab {
	width: 88px;
	margin-left: 1px;
	background: #fff;
	display: flex;
	align-items: center;
	justify-content: space-between;
	padding: 0 8px 0 17px;
	box-sizing: border-box;
}

.doc-tab b {
	color: #a87a30;
	font-size: 8px;
}

.doc-add {
	display: flex;
	align-items: center;
	margin-left: 4px;
	color: #8d9398;
	font-size: 10px;
}

.viewport {
	position: relative;
	flex: 1;
	overflow: hidden;
	background: linear-gradient(#ffffff 0%, #f6f6f6 10%, #a0a0a0 100%);
}

.scene {
	position: absolute;
	left: 0;
	top: 0;
}

.brand {
	font-family: 'Liberation Sans', sans-serif;
	font-size: 8.6px;
	font-style: italic;
	letter-spacing: 0.3px;
	fill: #5e4650;
}

.axis {
	font-family: 'Liberation Sans', sans-serif;
	font-size: 10px;
}

.axis.z {
	fill: #1a2fd6;
}

.axis.y {
	fill: #3fb53f;
}

.axis.x {
	fill: #e01f1f;
}

.hint {
	position: absolute;
	left: 11px;
	top: 5px;
	line-height: 8px;
	font-size: 6.6px;
	color: #333;
}

.view-tools {
	position: absolute;
	left: 278px;
	top: 1px;
	height: 12px;
	display: flex;
	align-items: center;
}

.combo.layer {
	width: 65px;
	margin-left: 3px;
	gap: 1px;
	justify-content: flex-start;
}

.combo.layer .caret {
	margin-left: auto;
}

.aabb {
	position: absolute;
	left: 335px;
	top: 51px;
	font-size: 13.4px;
	line-height: 17px;
	color: #f01c24;
}

.scale {
	position: absolute;
	left: 2px;
	bottom: 1px;
	font-size: 10.4px;
	line-height: 12px;
	color: #2a2a2a;
}

.status {
	flex: 1;
	display: flex;
	align-items: center;
	padding-left: 3px;
	color: #4a4a4a;
}

.status-right {
	margin-left: auto;
	display: flex;
	align-items: center;
	gap: 4px;
	padding-right: 1px;
}

.st-btn {
	width: 13px;
	height: 13px;
	display: flex;
	align-items: center;
	justify-content: center;
}

.st-btn.hot {
	background: #f7d98a;
	border: 1px solid #e3b64f;
	box-sizing: border-box;
}

.st-input {
	width: 200px;
	height: 11px;
	margin-left: 1px;
	background: #fff;
}

.watermark {
	position: absolute;
	right: 4px;
	bottom: 5px;
	font-size: 21px;
	line-height: 24px;
	color: rgba(255, 255, 255, 0.78);
	text-shadow: 0 0 1px #777, 1px 1px 1px rgba(90, 90, 90, 0.6);
	white-space: nowrap;
}
</style>

<style>
html,
body {
	margin: 0;
	background: #e2e6ea;
}
</style>
